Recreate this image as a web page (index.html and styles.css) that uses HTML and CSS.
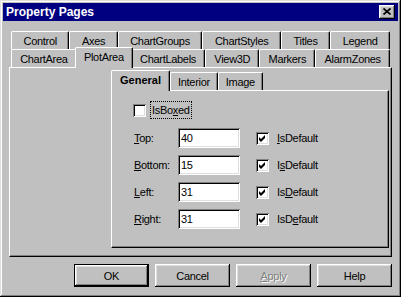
FILE: index.html
```html
<!DOCTYPE html>
<html lang="en">
<head>
    <meta charset="UTF-8">
    <title>Property Pages</title>
    <link rel="stylesheet" href="styles.css">
</head>
<body>
    <div class="window">
        <div class="titlebar">
            <span class="title">Property Pages</span>
            <div class="close">
                <svg width="8" height="7" viewBox="0 0 8 7"><path d="M0.5 0.5 L7.5 6.5 M7.5 0.5 L0.5 6.5" stroke="#000" stroke-width="1.7" fill="none"/></svg>
            </div>
        </div>

        <div class="content">
            <div class="tabstrip">
                <div class="tabrow">
                    <div class="tab">Control</div>
                    <div class="tab">Axes</div>
                    <div class="tab">ChartGroups</div>
                    <div class="tab">ChartStyles</div>
                    <div class="tab">Titles</div>
                    <div class="tab">Legend</div>
                </div>
                <div class="tabrow">
                    <div class="tab">ChartArea</div>
                    <div class="tab active">PlotArea</div>
                    <div class="tab">ChartLabels</div>
                    <div class="tab">View3D</div>
                    <div class="tab">Markers</div>
                    <div class="tab">AlarmZones</div>
                </div>
            </div>

            <div class="panel">
                <div class="subtabs">
                    <div class="tab active general">General</div>
                    <div class="tab">Interior</div>
                    <div class="tab">Image</div>
                </div>
                <div class="subpanel">
                    <div class="boxed-row">
                        <span class="checkbox"></span>
                        <span class="focus">IsBo<u>x</u>ed</span>
                    </div>
                    <div class="form">
                        <label><u>T</u>op:</label>
                        <div class="textbox">40</div>
                        <span class="checkbox checked"><svg width="7" height="7" viewBox="0 0 7 7"><path d="M0 2 L2 4 L6 0 L6 3 L2 7 L0 5 Z" fill="#000"/></svg></span>
                        <span><u>I</u>sDefault</span>

                        <label><u>B</u>ottom:</label>
                        <div class="textbox">15</div>
                        <span class="checkbox checked"><svg width="7" height="7" viewBox="0 0 7 7"><path d="M0 2 L2 4 L6 0 L6 3 L2 7 L0 5 Z" fill="#000"/></svg></span>
                        <span>I<u>s</u>Default</span>

                        <label><u>L</u>eft:</label>
                        <div class="textbox">31</div>
                        <span class="checkbox checked"><svg width="7" height="7" viewBox="0 0 7 7"><path d="M0 2 L2 4 L6 0 L6 3 L2 7 L0 5 Z" fill="#000"/></svg></span>
                        <span>Is<u>D</u>efault</span>

                        <label><u>R</u>ight:</label>
                        <div class="textbox">31</div>
                        <span class="checkbox checked"><svg width="7" height="7" viewBox="0 0 7 7"><path d="M0 2 L2 4 L6 0 L6 3 L2 7 L0 5 Z" fill="#000"/></svg></span>
                        <span>IsD<u>e</u>fault</span>
                    </div>
                </div>
            </div>

            <div class="buttons">
                <div class="btn default">OK</div>
                <div class="btn">Cancel</div>
                <div class="btn disabled"><u>A</u>pply</div>
                <div class="btn">Help</div>
            </div>
        </div>
    </div>
</body>
</html>
```

FILE: styles.css
```css
body {
    margin: 0;
    font-family: "Liberation Sans", Arial, sans-serif;
    font-size: 11px;
    letter-spacing: -0.3px;
    color: #000;
}
.window {
    width: 401px;
    height: 297px;
    box-sizing: border-box;
    padding: 3px;
    background: #c0c0c0;
    box-shadow: inset -1px -1px #000, inset 1px 1px #dfdfdf, inset -2px -2px #808080, inset 2px 2px #fff;
}
.titlebar {
    height: 18px;
    background: #000080;
    display: flex;
    align-items: center;
    justify-content: space-between;
    padding: 0 3px 0 3px;
}
.title {
    color: #fff;
    font-weight: bold;
    font-size: 12px;
    letter-spacing: 0;
}
.close {
    width: 16px;
    height: 14px;
    box-sizing: border-box;
    background: #c0c0c0;
    display: flex;
    align-items: center;
    justify-content: center;
    padding: 0 1px 1px 0;
    box-shadow: inset -1px -1px #000, inset 1px 1px #fff, inset -2px -2px #808080, inset 2px 2px #dfdfdf;
}

.content { padding: 10px 6px 0 6px; }

/* tabs */
.tabstrip { margin: 0 2px; }
.tabrow {
    display: flex;
    height: 18px;
    align-items: flex-start;
}
.tab {
    flex: 1 1 auto;
    height: 18px;
    box-sizing: border-box;
    padding: 0 6px;
    display: flex;
    align-items: center;
    justify-content: center;
    white-space: nowrap;
    background: #c0c0c0;
    border: 1px solid;
    border-color: #fff #000 transparent #fff;
    border-bottom: none;
    border-radius: 2px 2px 0 0;
    box-shadow: inset -1px 0 #808080;
}
.tab.active {
    position: relative;
    height: 21px;
    margin: -2px -2px -1px;
    padding-bottom: 2px;
}

.panel {
    height: 190px;
    box-sizing: border-box;
    border: 1px solid;
    border-color: #fff #000 #000 #fff;
    box-shadow: inset -1px -1px #808080;
    padding: 4px 2px 0 101px;
}
.subtabs {
    display: flex;
    height: 18px;
    padding-left: 2px;
    align-items: flex-start;
}
.subtabs .tab {
    flex: 0 0 auto;
    padding: 0 7px;
}
.subtabs .general {
    font-weight: bold;
    width: 59px;
    margin-right: 0;
    padding: 0 0 2px;
    letter-spacing: 0;
}
.subpanel {
    height: 158px;
    box-sizing: border-box;
    border: 1px solid;
    border-color: #fff #000 #000 #fff;
    box-shadow: inset -1px -1px #808080;
    padding: 10px 0 0 21px;
}

/* form */
.boxed-row {
    display: flex;
    align-items: center;
    height: 18px;
    gap: 4px;
}
.focus {
    outline: 1px dotted #000;
    outline-offset: -1px;
    padding: 2px 2px;
    height: 18px;
    box-sizing: border-box;
    line-height: 14px;
}
.checkbox {
    width: 13px;
    height: 13px;
    box-sizing: border-box;
    background: #fff;
    display: flex;
    align-items: center;
    justify-content: center;
    box-shadow: inset 1px 1px #808080, inset -1px -1px #fff, inset 2px 2px #000, inset -2px -2px #dfdfdf;
}
.form {
    display: grid;
    grid-template-columns: 44px 62px 13px auto;
    grid-auto-rows: 20px;
    row-gap: 7px;
    align-items: center;
    margin: 9px 0 0 1px;
}
.form .checkbox { margin-left: 16px; }
.form .checkbox + span { margin-left: 24px; }
.textbox {
    height: 20px;
    box-sizing: border-box;
    background: #fff;
    padding: 0 3px;
    line-height: 20px;
    box-shadow: inset 1px 1px #808080, inset -1px -1px #fff, inset 2px 2px #000, inset -2px -2px #dfdfdf;
}

/* buttons */
.buttons {
    display: flex;
    justify-content: flex-end;
    gap: 6px;
    margin-top: 7px;
}
.btn {
    width: 75px;
    height: 23px;
    box-sizing: border-box;
    display: flex;
    align-items: center;
    justify-content: center;
    background: #c0c0c0;
    box-shadow: inset -1px -1px #000, inset 1px 1px #fff, inset -2px -2px #808080, inset 2px 2px #dfdfdf;
}
.btn.default {
    border: 1px solid #000;
}
.btn.disabled {
    color: #808080;
    text-shadow: 1px 1px #fff;
}
```
